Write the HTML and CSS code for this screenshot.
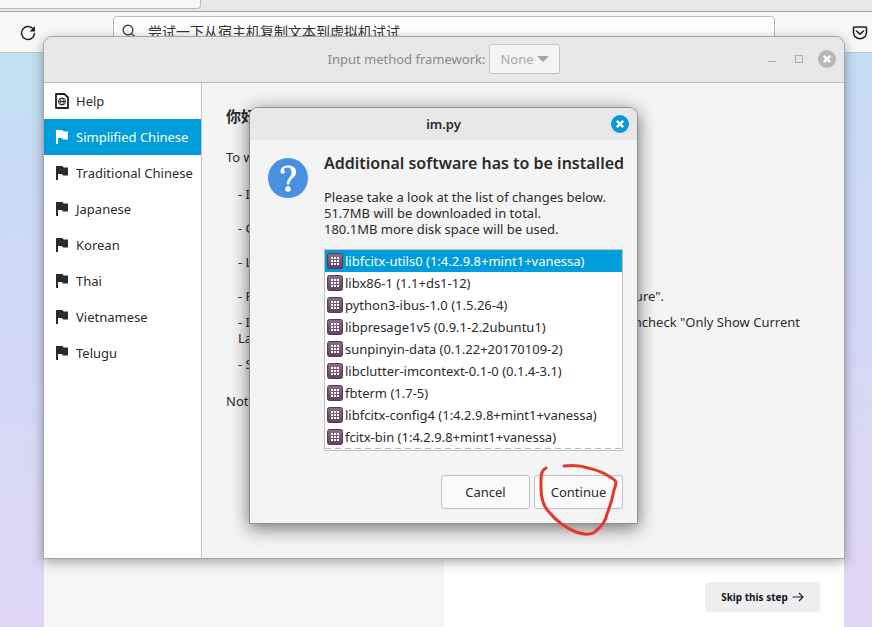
FILE: index.html
```html
<!DOCTYPE html>
<html lang="en">
<head>
<meta charset="utf-8">
<title>Input Method</title>
<link rel="stylesheet" href="styles.css">
</head>
<body>
<svg class="defs" aria-hidden="true">
  <defs>
    <linearGradient id="pkg-fill" x1="0" y1="0" x2="0" y2="1"><stop offset="0" stop-color="#8a7185"/><stop offset="1" stop-color="#664062"/></linearGradient>
    <symbol id="flag" viewBox="0 0 14 16"><path d="M1 1h6.200c1 0 .7 1.500 1.700 1.500H13v8H8.500c-1.500 0-.8-1.500-2-1.500H3v6H1z" fill="currentColor"/></symbol>
    <symbol id="pkg" viewBox="0 0 16 16"><rect x=".5" y=".5" width="15" height="15" rx="2" fill="url(#pkg-fill)" stroke="#573b53"/><path d="M4 4h2v2H4zM7 4h2v2H7zM10 4h2v2h-2zM4 7h2v2H4zM7 7h2v2H7zM10 7h2v2h-2zM4 10h2v2H4zM7 10h2v2H7zM10 10h2v2h-2z" fill="#fff"/></symbol>
    <symbol id="close" viewBox="0 0 18 18"><circle cx="9" cy="9" r="9" fill="currentColor"/><path d="M5.800 5.800l6.400 6.400M12.200 5.800l-6.400 6.400" stroke="#fff" stroke-width="2.400"/></symbol>
  </defs>
</svg>
<div class="browser">
  <div class="tabs"><div class="tab"></div></div>
  <div class="toolbar">
    <button class="tool reload" aria-label="Reload"><svg width="16" height="16" viewBox="0 0 16 16"><path d="M13.600 4.600A6.500 6.500 0 1 0 14.500 8.600" fill="none" stroke="#222" stroke-width="1.500" stroke-linecap="round"/><path d="M15 1v5.500H9.500z" fill="#222"/></svg></button>
    <div class="address">
      <svg width="14" height="14" viewBox="0 0 14 14"><circle cx="6" cy="6" r="4.800" fill="none" stroke="#444" stroke-width="1.400"/><path d="M9.500 9.500L13.500 13.500" stroke="#444" stroke-width="1.400"/></svg>
      <input type="text" aria-label="Address" value="尝试一下从宿主机复制文本到虚拟机试试">
    </div>
    <button class="tool pocket" aria-label="Save"><svg width="16" height="16" viewBox="0 0 16 16"><path d="M2.500 2h11q1 0 1 1v4.500a6.500 6.200 0 0 1-13 0V3q0-1 1-1z" fill="none" stroke="#222" stroke-width="1.600"/><path d="M4.500 6L8 9.200 11.500 6" fill="none" stroke="#222" stroke-width="1.600" stroke-linecap="round" stroke-linejoin="round"/></svg></button>
  </div>
  <div class="page">
    <div class="card">
      <div class="card-left"></div>
      <div class="card-right">
        <button class="skip">Skip this step <svg width="12" height="10" viewBox="0 0 12 10"><path d="M.5 5h10.500M7 1l4 4-4 4" fill="none" stroke="#222" stroke-width="1.200"/></svg></button>
      </div>
    </div>
  </div>
</div>

<section class="window">
  <header class="titlebar">
    <div class="framework">
      <label for="fw">Input method framework:</label>
      <div class="combo">
        <select id="fw" disabled><option>None</option></select>
        <svg width="12" height="6" viewBox="0 0 12 6"><path d="M0 0h12L6 6z" fill="#a3a3a3"/></svg>
      </div>
    </div>
    <div class="controls">
      <button aria-label="Minimize"><svg width="8" height="8" viewBox="0 0 8 8"><path d="M0 6.500h8" stroke="#aaa"/></svg></button>
      <button aria-label="Maximize"><svg width="8" height="8" viewBox="0 0 8 8"><path d="M.5 .5h7v7h-7z" fill="none" stroke="#aaa"/></svg></button>
      <button class="close-muted" aria-label="Close"><svg width="18" height="18"><use href="#close"/></svg></button>
    </div>
  </header>
  <div class="body">
    <nav class="sidebar">
      <a href="#help"><svg width="14" height="16" viewBox="0 0 14 16"><path d="M1 1h8.500L13 4.500V15H1z" fill="none" stroke="#222" stroke-width="1.800" stroke-linejoin="round"/><circle cx="7" cy="8.500" r="3.500" fill="none" stroke="#222"/><ellipse cx="7" cy="8.500" rx="1.500" ry="3.500" fill="none" stroke="#222" stroke-width=".8"/><path d="M3.500 8.500h7" stroke="#222"/></svg>Help</a>
      <a class="selected" href="#zh-cn"><svg width="14" height="16"><use href="#flag"/></svg>Simplified Chinese</a>
      <a href="#zh-tw"><svg width="14" height="16"><use href="#flag"/></svg>Traditional Chinese</a>
      <a href="#ja"><svg width="14" height="16"><use href="#flag"/></svg>Japanese</a>
      <a href="#ko"><svg width="14" height="16"><use href="#flag"/></svg>Korean</a>
      <a href="#th"><svg width="14" height="16"><use href="#flag"/></svg>Thai</a>
      <a href="#vi"><svg width="14" height="16"><use href="#flag"/></svg>Vietnamese</a>
      <a href="#te"><svg width="14" height="16"><use href="#flag"/></svg>Telugu</a>
    </nav>
    <main class="content">
      <h2>你好</h2>
      <p>To w</p>
      <ul>
        <li>- I</li>
        <li>- C</li>
        <li>- L</li>
        <li class="split short"><span>- R</span><span>ure".</span></li>
        <li class="split"><span>- I<br>La</span><span>ncheck "Only Show Current</span></li>
        <li>- S</li>
      </ul>
      <p>Not</p>
    </main>
  </div>

  <div class="overlay">
    <div class="dialog" role="dialog" aria-labelledby="dlg-title">
      <header class="dialog-bar">
        <span id="dlg-title">im.py</span>
        <button aria-label="Close"><svg width="18" height="18"><use href="#close"/></svg></button>
      </header>
      <div class="dialog-body">
        <svg class="question" width="40" height="40" viewBox="0 0 40 40"><circle cx="20" cy="20" r="20" fill="#4a90e0"/><path d="M12.500 13.500C12.500 9.800 15.800 7.600 20 7.600c4.700 0 8.200 2.400 8.200 6.400 0 5.500-6.700 6.300-6.900 12.500h-2.500c-.1-6.700 4.800-6.800 4.800-12.300 0-3-1.700-4.700-4.200-4.700-2.200 0-3.600 1-3.400 2.200.2 1 .8 1.300.8 2.200 0 1.100-.9 1.800-2 1.800-1.400 0-2.300-.8-2.300-2.200z" fill="#fff"/><circle cx="20" cy="31" r="2.700" fill="#fff"/></svg>
        <div class="message">
          <h1>Additional software has to be installed</h1>
          <p>Please take a look at the list of changes below.<br>51.7MB will be downloaded in total.<br>180.1MB more disk space will be used.</p>
          <ul class="packages">
            <li class="selected"><svg width="16" height="16"><use href="#pkg"/></svg>libfcitx-utils0 (1:4.2.9.8+mint1+vanessa)</li>
            <li><svg width="16" height="16"><use href="#pkg"/></svg>libx86-1 (1.1+ds1-12)</li>
            <li><svg width="16" height="16"><use href="#pkg"/></svg>python3-ibus-1.0 (1.5.26-4)</li>
            <li><svg width="16" height="16"><use href="#pkg"/></svg>libpresage1v5 (0.9.1-2.2ubuntu1)</li>
            <li><svg width="16" height="16"><use href="#pkg"/></svg>sunpinyin-data (0.1.22+20170109-2)</li>
            <li><svg width="16" height="16"><use href="#pkg"/></svg>libclutter-imcontext-0.1-0 (0.1.4-3.1)</li>
            <li><svg width="16" height="16"><use href="#pkg"/></svg>fbterm (1.7-5)</li>
            <li><svg width="16" height="16"><use href="#pkg"/></svg>libfcitx-config4 (1:4.2.9.8+mint1+vanessa)</li>
            <li><svg width="16" height="16"><use href="#pkg"/></svg>fcitx-bin (1:4.2.9.8+mint1+vanessa)</li>
          </ul>
        </div>
      </div>
      <div class="actions">
        <button>Cancel</button>
        <div class="marked">
          <button>Continue</button>
          <svg class="scribble" width="84" height="76" viewBox="0 0 84 76" aria-hidden="true"><path d="M10 6C4 9 5 16 5 26C5 36 7 44 13 50C22 61 30 66 40 70C49 73 56 73 60 69C67 63 70 58 71 52C74 45 76 38 78 28C81 20 81 19 74 15C66 9 60 8 52 6C44 3 36 3 28 4" fill="none" stroke="#e6352b" stroke-width="3" stroke-linecap="round" stroke-linejoin="round"/></svg>
        </div>
      </div>
    </div>
  </div>
</section>
</body>
</html>
```
FILE: styles.css
```css
* { box-sizing: border-box; }
body {
  margin: 0;
  font: 13px/16px "Noto Sans", "Noto Sans CJK SC", sans-serif;
  color: #2b2b2b;
  overflow: hidden;
}
h1, h2, p, ul { margin: 0; padding: 0; }
ul { list-style: none; }
button { font: inherit; color: inherit; padding: 0; border: 0; background: none; }
svg { display: block; flex: none; }
.defs { position: absolute; width: 0; height: 0; }

.browser { display: flex; flex-direction: column; height: 100vh; }
.tabs { height: 12px; background: #e8e8e8; border-bottom: 1px solid #a3a3a3; }
.tab { width: 201px; height: 9px; background: #f7f7f7; border: solid #bcbcbc; border-width: 0 1px 1px 0; border-radius: 0 0 4px 0; }
.toolbar { display: flex; height: 41px; padding: 4px 4px 0 20px; background: #f8f8f8; border-bottom: 1px solid #c8c8c8; }
.tool { height: 34px; }
.address { display: flex; align-items: center; flex: 1; gap: 12px; height: 34px; margin: 0 77px; padding: 0 8px 4px; background: #fff; border: 1px solid #bbb; border-radius: 4px; }
.address input { flex: 1; min-width: 0; padding: 0; border: 0; background: none; color: #333; font: 14px "Noto Sans CJK SC", sans-serif; }
.page { display: flex; flex: 1; padding: 0 28px 0 44px; background: linear-gradient(176deg, #c1e3f1 0%, #c7dbf3 16%, #d5d9f5 55%, #dcd7f4 78%, #e0d5f4 100%); }
.card { display: grid; grid-template-columns: 1fr 1fr; flex: 1; }
.card-left { background: #f6f5f3; }
.card-right { display: flex; align-items: flex-end; justify-content: flex-end; padding: 0 24px 15px 0; background: #fff; }
.skip { display: flex; align-items: center; justify-content: center; gap: 4px; width: 115px; height: 30px; border-radius: 4px; background: #eeeef0; font-size: 10px; font-weight: 700; color: #15141a; }

.window { position: absolute; top: 36px; left: 43px; right: 27px; border: 1px solid #a5a5a5; border-radius: 10px 10px 0 0; background: #f4f4f4; box-shadow: 0 3px 12px rgba(0, 0, 0, .35); }
.titlebar { display: flex; align-items: center; justify-content: center; height: 46px; position: relative; padding-bottom: 1px; border-bottom: 1px solid #bdbdbd; border-radius: 9px 9px 0 0; background: #e8e8e8; color: #8a8a8a; }
.framework { display: flex; align-items: center; gap: 4px; }
.combo { position: relative; }
.combo select { display: block; appearance: none; width: 71px; height: 30px; padding: 0 10px; border: 1px solid #c6c6c6; border-radius: 2px; background: #f4f4f4; color: #a9a9a9; opacity: 1; font: inherit; }
.combo svg { position: absolute; right: 11px; top: 12px; pointer-events: none; }
.controls { position: absolute; right: 8px; top: 13px; display: flex; align-items: center; gap: 19px; }
.close-muted { color: #b8b8b8; margin-left: -4px; }
.body { display: flex; min-height: 475px; }
.sidebar { width: 158px; background: #fff; border-right: 1px solid #c4c4c4; }
.sidebar a { display: flex; align-items: center; gap: 7px; height: 36px; padding-left: 11px; color: #2b2b2b; text-decoration: none; white-space: nowrap; }
.sidebar .selected { background: #009ddc; color: #fff; }
.content { flex: 1; padding: 22px 44px 0 24px; }
.content h2 { font-size: 15px; line-height: 22px; margin-bottom: 22px; }
.content ul { display: grid; gap: 18px; padding: 21px 0 21px 12px; }
.content ul li { white-space: nowrap; }
.split { display: flex; justify-content: space-between; }
.split + li { margin-top: -8px; }
.content .short { padding-right: 136px; }

.overlay { position: absolute; inset: 70px 0 auto; display: flex; justify-content: center; padding-right: 1px; }
.dialog { width: 389px; border: 1px solid #8f8f8f; border-radius: 9px 9px 0 0; background: #f4f4f4; box-shadow: 0 4px 18px rgba(0, 0, 0, .55); }
.dialog-bar { display: flex; align-items: center; justify-content: center; position: relative; height: 32px; border-radius: 8px 8px 0 0; background: #e8e8e8; font-weight: 600; }
.dialog-bar button { position: absolute; right: 8px; top: 7px; color: #069bd8; }
.dialog-body { display: flex; gap: 16px; padding: 12px 14px 0 18px; }
.question { margin-top: 6px; }
.message { flex: 1; min-width: 0; }
.message h1 { font-size: 16px; line-height: 22px; font-weight: 600; white-space: nowrap; }
.message p { margin: 15px 0 12px; }
.packages { padding-bottom: 1px; border: 1px solid #bfbfbf; background: #fff; }
.packages li { display: flex; align-items: center; gap: 2px; height: 22px; padding-left: 2px; white-space: nowrap; }
.packages::after { content: ""; display: block; height: 1px; background: repeating-linear-gradient(90deg, #bbb 0 6px, #fff 6px 10px); }
.packages .selected { background: #009ddc; color: #fff; }
.actions { display: flex; justify-content: flex-end; gap: 4px; padding: 24px 14px 14px; }
.actions button { width: 89px; height: 34px; border: 1px solid #c2c2c2; border-radius: 3px; background: #fafafa; }
.marked { position: relative; }
.scribble { position: absolute; left: 2px; top: -13px; pointer-events: none; }
```
